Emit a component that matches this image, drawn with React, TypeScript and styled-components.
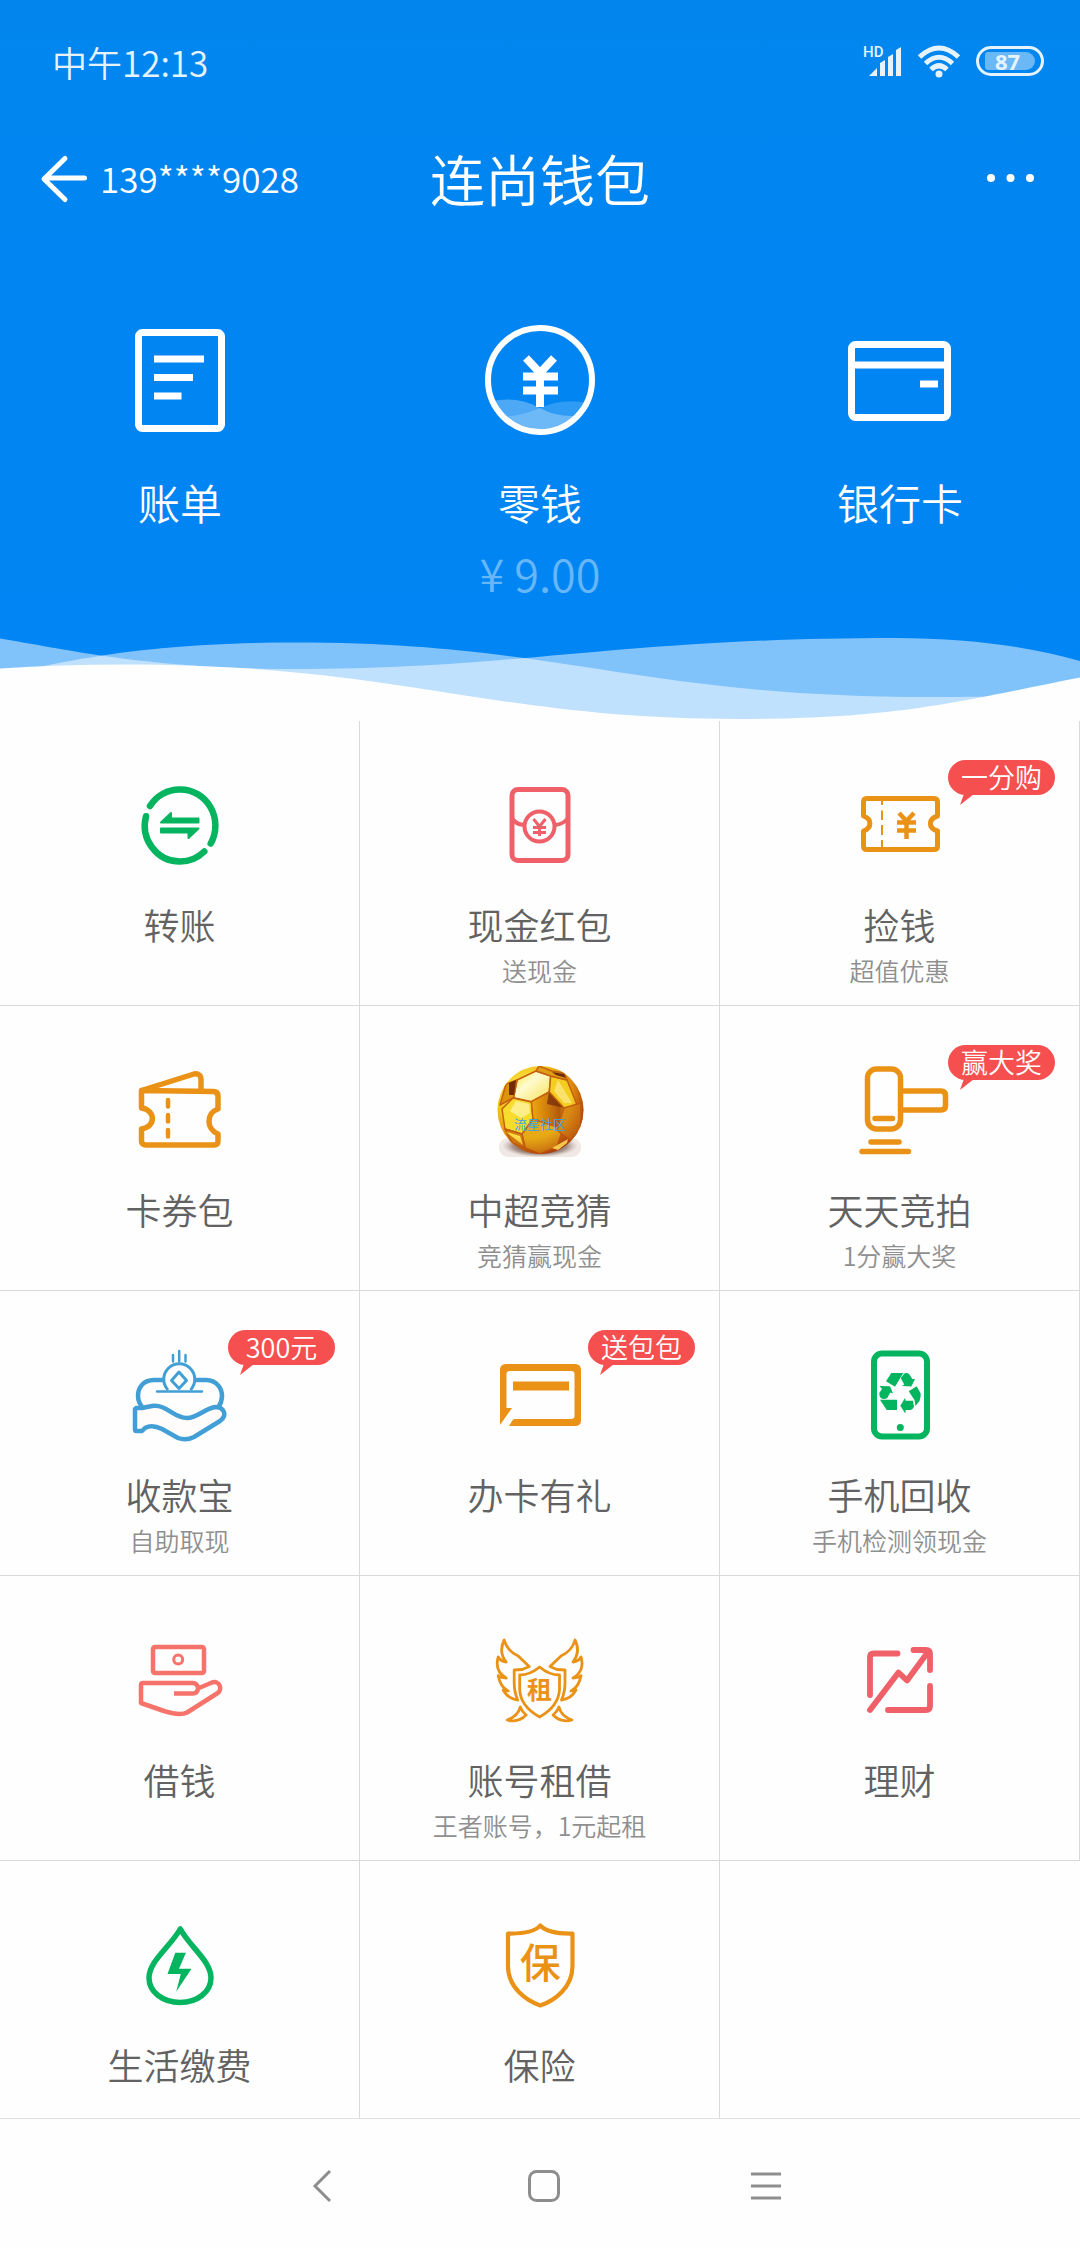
import React from "react";
import styled, { createGlobalStyle } from "styled-components";

const GREEN = "#04b45f";
const ORANGE = "#ea9216";
const RED = "#ef6069";
const CORAL = "#f6736b";
const BLUE = "#429fd6";

const GlobalStyle = createGlobalStyle`
  * { box-sizing: border-box; }
  body {
    margin: 0;
    background: #fefefe;
    font-family: "Noto Sans CJK SC", "Noto Sans", sans-serif;
    font-weight: 350;
  }
  button {
    font: inherit;
    color: inherit;
    background: none;
    border: 0;
    padding: 0;
    margin: 0;
    cursor: pointer;
  }
  svg { display: block; flex: none; overflow: visible; }
`;

const Hero = styled.header`
  color: #fff;
  background: linear-gradient(#0286ee, #0085f2 260px, #0085f4);
`;

const StatusBar = styled.div`
  display: flex;
  align-items: center;
  justify-content: space-between;
  height: 122px;
  padding: 0 36px 0 52px;
  color: #e6f3fd;
  font-size: 35px;
`;

const StatusIcons = styled.div`
  display: flex;
  align-items: center;
  gap: 16px;
`;

const Battery = styled.span`
  display: flex;
  align-items: center;
  justify-content: center;
  width: 68px;
  height: 30px;
  border: 3px solid #e6f3fd;
  border-radius: 15px;
`;

const BatteryLevel = styled.span`
  width: 50px;
  height: 18px;
  border-radius: 3px 9px 9px 3px;
  background: #6bb8f6;
  font-family: "Noto Sans", sans-serif;
  font-size: 22px;
  font-weight: 700;
  line-height: 18px;
  padding-left: 10px;
`;

const TitleBar = styled.div`
  display: grid;
  grid-template-columns: 1fr auto 1fr;
  align-items: center;
  height: 116px;
  padding: 0 41px;
`;

const Account = styled.button`
  display: flex;
  align-items: center;
  justify-self: start;
  gap: 13px;
  font-size: 35px;
`;

const AccountNumber = styled.span`
  padding-bottom: 6px;
`;

const Title = styled.h1`
  margin: 0;
  padding-bottom: 6px;
  font-size: 55px;
  font-weight: 350;
  line-height: 80px;
`;

const MoreButton = styled.button`
  justify-self: end;
`;

const Actions = styled.nav`
  display: grid;
  grid-template-columns: repeat(3, 1fr);
  align-items: start;
  padding: 87px 0 32px;
`;

const Action = styled.button`
  display: flex;
  flex-direction: column;
  align-items: center;
`;

const ActionLabel = styled.span`
  margin-top: 37px;
  font-size: 42px;
  line-height: 60px;
`;

const Amount = styled.span`
  margin-top: 11px;
  font-size: 45px;
  line-height: 60px;
  color: #66b6f8;
`;

const Wave = styled.svg`
  width: 100%;
  height: 86px;
`;

const Grid = styled.main`
  display: grid;
  grid-template-columns: repeat(3, 1fr);
  grid-auto-rows: minmax(257px, auto);
`;

const Cell = styled.button<{ $last: boolean }>`
  position: relative;
  display: flex;
  flex-direction: column;
  align-items: center;
  justify-content: flex-start;
  padding: 57px 0 14px;
  border-right: 1px solid #d9d9d9;
  border-bottom: ${(p) => (p.$last ? "0" : "1px solid #d9d9d9")};
`;

const CellLabel = styled.span`
  margin-top: 25px;
  font-size: 36px;
  line-height: 51px;
  color: #626262;
`;

const CellNote = styled.span`
  font-size: 25px;
  line-height: 41px;
  color: #8f8f8f;
`;

const Badge = styled.span`
  position: absolute;
  top: 39px;
  right: 24px;
  width: 107px;
  height: 35px;
  border-radius: 18px;
  background: #f54f50;
  color: #fff;
  font-size: 27px;
  line-height: 34px;
  text-align: center;

  &::after {
    content: "";
    position: absolute;
    left: 12px;
    top: 34px;
    width: 14px;
    height: 11px;
    background: #f54f50;
    clip-path: polygon(28% 0, 100% 0, 0 100%);
  }
`;

const SystemNav = styled.footer`
  display: flex;
  justify-content: center;
  height: 130px;
  padding: 5px 0 0 8px;
  border-top: 1px solid #e2e2e2;
`;

const NavButton = styled.button`
  display: flex;
  align-items: center;
  justify-content: center;
  width: 222px;
`;

type IconProps = { color: string; width?: number; children: React.ReactNode };

const Icon = ({ color, width = 5, children }: IconProps) => (
  <svg
    width="96"
    height="96"
    viewBox="0 0 96 96"
    fill="none"
    stroke={color}
    strokeWidth={width}
    strokeLinejoin="round"
    aria-hidden="true"
  >
    {children}
  </svg>
);

const TransferIcon = () => (
  <Icon color={GREEN} width={6.5}>
    <path
      d="M18 28A35 36 0 0 1 48 11.500A35 36 0 0 1 78.700 65.500M72.300 73.500A35 36 0 0 1 48 83.500A35 36 0 0 1 14 38.200"
      strokeLinecap="round"
    />
    <path
      d="M29 44.500L39 35V40.500H66.500V44.500ZM66.500 50.500L56.500 60V54.500H29V50.500Z"
      fill={GREEN}
      strokeWidth="2"
    />
  </Icon>
);

const RedPacketIcon = () => (
  <Icon color={RED} width={5}>
    <rect x="20" y="11.500" width="56" height="71" rx="6" />
    <circle cx="47.500" cy="48.500" r="15" strokeWidth="4" />
    <path d="M20 40Q23 46 32 47M76 40Q72 46 63 47" strokeWidth="4" />
    <path d="M41.500 41L47.500 48.500L53.500 41M47.500 48V58M41 49.500H54M41 54.500H54" strokeWidth="3" />
  </Icon>
);

const CouponIcon = () => (
  <Icon color={ORANGE} width={5}>
    <path d="M15 20.500H82Q85.500 20.500 85.500 24V38C76 41 76 50 85.500 53V68Q85.500 71.500 82 71.500H15Q11.500 71.500 11.500 68V53C20 50 20 41 11.500 38V24Q11.500 20.500 15 20.500Z" />
    <path d="M30 22V27M30 32.500V42M30 47V57M30 62V70" strokeWidth="2" />
    <path d="M47 35L54.500 43L62 35M54.500 43V61M45 44.500H64M45 52.500H64" strokeWidth="4.500" />
  </Icon>
);

const CardPackIcon = () => (
  <Icon color={ORANGE} width={5.5}>
    <path d="M9.500 27.500L81 28.500Q86 28.500 86 33V46C74 50 74 66 86 71V78Q86 82 82 82H14Q9.500 82 9.500 78V66C24 64 24 47 9.500 45Z" />
    <path d="M9.500 27.500L62 11Q69 10 69 17V27" />
    <path d="M36 37V43.500M36 52V58.500M36 67V73.500" strokeLinecap="round" strokeWidth="4.500" />
  </Icon>
);

const FootballIcon = () => (
  <svg width="96" height="96" viewBox="0 0 96 96" aria-hidden="true">
    <defs>
      <radialGradient id="ball" cx="0.32" cy="0.3" r="0.78">
        <stop offset="0" stopColor="#fdf04f" />
        <stop offset="0.45" stopColor="#f2c41a" />
        <stop offset="0.75" stopColor="#dc850c" />
        <stop offset="1" stopColor="#a83a0c" />
      </radialGradient>
      <radialGradient id="ballRim" cx="0.4" cy="0.35" r="0.66">
        <stop offset="0.65" stopColor="#b8480c" stopOpacity="0" />
        <stop offset="1" stopColor="#a8380c" stopOpacity="0.75" />
      </radialGradient>
      <radialGradient id="ballShade">
        <stop offset="0.3" stopColor="#43291d" />
        <stop offset="0.75" stopColor="#8c7469" stopOpacity="0.7" />
        <stop offset="1" stopColor="#e9dfda" stopOpacity="0.4" />
      </radialGradient>
      <linearGradient id="panelLight" x1="0" y1="0" x2="1" y2="1">
        <stop offset="0" stopColor="#f6e22c" />
        <stop offset="0.4" stopColor="#fffbd0" />
        <stop offset="1" stopColor="#f8e14e" />
      </linearGradient>
      <linearGradient id="panelDark">
        <stop offset="0" stopColor="#efa80e" />
        <stop offset="0.5" stopColor="#cf7c0c" />
        <stop offset="0.85" stopColor="#b05a0b" />
        <stop offset="1" stopColor="#d58a12" />
      </linearGradient>
      <clipPath id="ballClip">
        <ellipse cx="48.500" cy="47" rx="43" ry="44" />
      </clipPath>
    </defs>
    <rect x="7" y="75" width="82" height="19" rx="9" fill="#efe8e5" />
    <ellipse cx="48" cy="83" rx="37" ry="11" fill="url(#ballShade)" />
    <ellipse cx="48.500" cy="47" rx="43" ry="44" fill="url(#ball)" />
    <g clipPath="url(#ballClip)" stroke="#c56010" strokeWidth="1.500" strokeLinejoin="round" fill="none">
      <path d="M44 8L25 17L21.600 34.700L39.400 38.700L57.300 29L58.700 13Z" fill="url(#panelLight)" />
      <path d="M21 35L39.400 39L41 56L30 71L13 66L10 46Z" fill="#f7dc2e" />
      <path d="M24 38L37 41L38 50L29 55L18 48Z" fill="#fff3a0" stroke="none" opacity="0.8" />
      <path d="M57.300 29L72.300 45.300L65 67L41 56.300L39.400 38.700Z" fill="url(#panelDark)" />
      <path d="M57 29L72.300 45L55 41Z" fill="#7b2f07" stroke="none" opacity="0.8" />
      <path d="M58.700 13L75 17L85.500 43L72.300 45.300L57.300 29Z" fill="#f3cd20" />
      <path d="M66 17L80 40L72 40L62 28Z" fill="#fff0a0" stroke="none" opacity="0.6" />
      <path d="M25 17L14 21L8 42L21.600 34.700Z" fill="#dd930e" />
      <path d="M24 17L17 20V32L22 32Z" fill="#6d2b08" stroke="none" />
      <path d="M47 3L60 8L72 10L75 17L58.700 13L44 8Z" fill="#e09c12" />
      <path d="M60 9L72 11L74 15L64 12Z" fill="#6d2b08" stroke="none" />
      <path d="M30 71L33 85L48 91L65 84L71 66L41 56Z" fill="#e7aa15" />
      <path d="M72 45L89 40V66L79 78L65 67Z" fill="#d98a14" />
      <path d="M13 66L30 71L33 85L20 80Z" fill="#d4820e" />
      <path d="M14 69L28 73L31 82Z" fill="#ffe34a" stroke="none" />
      <path d="M0 0H96V96H0Z" fill="url(#ballRim)" stroke="none" />
      <path d="M60 85L76 76L75 80L66 87Z" fill="#f5c84a" stroke="none" />
    </g>
    <text x="48" y="66" textAnchor="middle" fontSize="13" fill="#2ba6ee">
      流星社区
    </text>
  </svg>
);

const GavelIcon = () => (
  <Icon color={ORANGE} width={5.5}>
    <rect x="15.500" y="6" width="33" height="60" rx="9" />
    <path d="M49 28H89Q93.500 28 93.500 33V42.500Q93.500 47 89 47H49" />
    <path d="M23 55.500H40.500M19 79H47M10 88.500H56.500" strokeLinecap="round" />
  </Icon>
);

const CollectIcon = () => (
  <Icon color={BLUE} width={4.5}>
    <path d="M31 32H22C10 32 6 41 6 48Q6 55 12 61M63 32H74C85 32 90 41 90 48Q90 54 86 60" />
    <path
      d="M4 60H10L20 58C35 56 41 70 55 70C65 70 72 61 83 59C92 59 96 67 88 73L62 89Q54 93 46 90L30 81Q20 76 13 80L10 83H4Q3 83 3 81V61Z"
      fill="#fffcfb"
    />
    <path d="M36 42A15.500 15.500 0 1 1 58.500 42" strokeWidth="3" />
    <path d="M47 24L54.500 32.500L47 40.500L39.500 32.500Z" strokeWidth="3" />
    <path d="M25 43.500H70M41 7V13.500M47.200 3V13.500M53.500 7V13.500" strokeWidth="2.500" strokeLinecap="round" />
  </Icon>
);

const CardGiftIcon = () => (
  <Icon color={ORANGE} width={7}>
    <path
      d="M8 77V22Q8 16 14 16H83Q89 16 89 22V72Q89 78 83 78H17L20 73Q21 71 23 71H79Q82.500 71 82.500 68V26Q82.500 23 79 23H18Q14.500 23 14.500 26V60H20Z"
      fill={ORANGE}
      stroke="none"
    />
    <path d="M21 38H77" strokeWidth="9" />
  </Icon>
);

const RecycleIcon = () => (
  <Icon color={GREEN} width={6}>
    <rect x="22" y="5.500" width="53" height="83" rx="8" />
    <circle cx="48.300" cy="79.500" r="3.500" fill={GREEN} stroke="none" />
    <g fill={GREEN} stroke="none">
      <path d="M34 33.300L39.300 25H51.300L43 38.700Z" />
      <path d="M48.700 30.300L52 25.700Q55 24 57.500 26.500L60.300 31L63 31L59.300 38.500L50 38L52.300 36.500Z" />
      <path d="M56.700 43.300L64.700 38.300L68.700 45.500Q69 49 67.500 53L63.500 58L62.500 52Z" />
      <path d="M48.300 57.700L53 50L53.700 52.700H61L62 58.500Q60.500 62 58 62H53.700L53.300 65.500Z" />
      <path d="M28 51.700H45V62H34.700Z" />
      <path d="M27.500 38L38 38.300L41 45.500L38.300 44.500L35.300 50Q32 52 29 50.300Q27 48 27.300 45L30 41Z" />
    </g>
  </Icon>
);

const BorrowIcon = () => (
  <Icon color={CORAL} width={4.5}>
    <rect x="21" y="14" width="51" height="26" rx="2" />
    <circle cx="46.200" cy="26.500" r="4.500" strokeWidth="3" />
    <path d="M42 60.500H61Q65 60.500 66 56L67 55L80 49.500C88 47 91 57 85 60.500L55 79.500Q48 83 32 78L9 70V52Q9 50 11 50H61Q65 50 66 55" />
  </Icon>
);

const wing =
  "M58 33.500L69 23Q80 18 83 7Q89 19 81 29Q87 28 89 24Q93 38 81 45Q87 45 89 42.500Q87 54 79 58L84 57Q79 66 69.500 67Q73 59 73 50V37L65 36.500Z M67 74Q69 83 80 87Q69 90 61 82Q65 79 67 74Z";

const RentIcon = () => (
  <Icon color={ORANGE} width={2.8}>
    <path d={wing} />
    <path d={wing} transform="translate(95.200 0) scale(-1 1)" />
    <path d="M47.600 34Q57 42 67.500 42V56Q67 73 47.600 84Q28 73 27.700 56V42Q38 42 47.600 34Z" />
    <text x="47.600" y="66" textAnchor="middle" fontSize="25" fontWeight="700" fill={ORANGE} stroke="none">
      租
    </text>
  </Icon>
);

const FinanceIcon = () => (
  <Icon color={RED} width={5.8}>
    <path
      d="M18 62V24Q18 20.500 22 20.500H45.500M61.500 17H74Q78 17 78 21V37M78 53V73Q78 77 74 77H36M18 77L46.500 39.500L55 47.500L76 19"
      strokeLinecap="round"
    />
  </Icon>
);

const UtilityIcon = () => (
  <Icon color={GREEN} width={5.5}>
    <path d="M48.300 11C38 29 17 43 17 60C17 74 31 84.500 48.300 84.500C65 84.500 79 74 79 60C79 43 58 29 48.300 11Z" />
    <path d="M43.300 34.700H53.900L47 50.700H59.500L44.200 73.700L48.800 56H35.500Z" fill={GREEN} stroke="none" />
  </Icon>
);

const InsuranceIcon = () => (
  <Icon color={ORANGE} width={4.2}>
    <path d="M48.300 7.500Q41 16 16 15.500V48C16 70 35 83 48.300 87.500C62 83 80.500 70 80.500 48V15.500Q56 16 48.300 7.500Z" />
    <text x="48.300" y="60" textAnchor="middle" fontSize="41" fontWeight="500" fill={ORANGE} stroke="none">
      保
    </text>
  </Icon>
);

type Service = { label: string; note?: string; badge?: string; icon: React.ReactNode };

const services: Service[] = [
  { label: "转账", icon: <TransferIcon /> },
  { label: "现金红包", note: "送现金", icon: <RedPacketIcon /> },
  { label: "捡钱", note: "超值优惠", badge: "一分购", icon: <CouponIcon /> },
  { label: "卡券包", icon: <CardPackIcon /> },
  { label: "中超竞猜", note: "竞猜赢现金", icon: <FootballIcon /> },
  { label: "天天竞拍", note: "1分赢大奖", badge: "赢大奖", icon: <GavelIcon /> },
  { label: "收款宝", note: "自助取现", badge: "300元", icon: <CollectIcon /> },
  { label: "办卡有礼", badge: "送包包", icon: <CardGiftIcon /> },
  { label: "手机回收", note: "手机检测领现金", icon: <RecycleIcon /> },
  { label: "借钱", icon: <BorrowIcon /> },
  { label: "账号租借", note: "王者账号，1元起租", icon: <RentIcon /> },
  { label: "理财", icon: <FinanceIcon /> },
  { label: "生活缴费", icon: <UtilityIcon /> },
  { label: "保险", icon: <InsuranceIcon /> },
];

const lastRowStart = Math.floor((services.length - 1) / 3) * 3;

const BillIcon = () => (
  <svg width="110" height="110" viewBox="0 0 110 110" fill="none" stroke="#fff" strokeWidth="7" aria-hidden="true">
    <rect x="13.500" y="7.500" width="83" height="96" rx="4" />
    <path d="M29 34H79M29 52.500H68M29 71H56.500" />
  </svg>
);

const ChangeIcon = () => (
  <svg width="110" height="110" viewBox="0 0 110 110" fill="none" aria-hidden="true">
    <clipPath id="coin">
      <circle cx="55" cy="55" r="50" />
    </clipPath>
    <g clipPath="url(#coin)" fill="#fff">
      <path d="M0 78Q30 69 55 83Q78 96 110 88V110H0Z" opacity="0.300" />
      <path d="M0 92Q30 94 55 83Q80 71 110 80V110H0Z" opacity="0.180" />
    </g>
    <circle cx="55" cy="55" r="52" stroke="#fff" strokeWidth="6" />
    <path d="M41 33L55 48L69 33M55 47V82M38 51.500H73M38 65.500H73" stroke="#fff" strokeWidth="8" />
  </svg>
);

const BankCardIcon = () => (
  <svg width="110" height="110" viewBox="0 0 110 110" fill="none" stroke="#fff" strokeWidth="7" aria-hidden="true">
    <rect x="6.500" y="19.500" width="96" height="73" rx="4" />
    <path d="M6 40H103M75 59H93" />
  </svg>
);

export default function App() {
  return (
    <>
      <GlobalStyle />
      <Hero>
        <StatusBar>
          <time>中午12:13</time>
          <StatusIcons>
            <svg width="39" height="32" viewBox="0 0 39 32" fill="#e6f3fd" aria-hidden="true">
              <text x="0" y="12" fontSize="15" fontWeight="500" fontFamily="Roboto, sans-serif">
                HD
              </text>
              <path d="M6 31L14 23V31ZM17 18L22 15V31H17ZM25 12L30 9V31H25ZM33 5L38 2V31H33Z" />
            </svg>
            <svg width="42" height="32" viewBox="0 0 42 32" fill="none" stroke="#e6f3fd" strokeWidth="5" aria-hidden="true">
              <path d="M1.500 12Q21 -6 40.500 12M7.500 18.500Q21 6 34.500 18.500M13 24.500Q21 17 29 24.500" />
              <circle cx="21" cy="29" r="3.500" fill="#e6f3fd" stroke="none" />
            </svg>
            <Battery>
              <BatteryLevel>87</BatteryLevel>
            </Battery>
          </StatusIcons>
        </StatusBar>
        <TitleBar>
          <Account aria-label="返回 139****9028">
            <svg
              width="46"
              height="46"
              viewBox="0 0 46 46"
              fill="none"
              stroke="#fff"
              strokeWidth="5"
              strokeLinecap="round"
              strokeLinejoin="round"
            >
              <path d="M24 1.500L3 22L24 42.500M4 21H43.500" />
            </svg>
            <AccountNumber>139****9028</AccountNumber>
          </Account>
          <Title>连尚钱包</Title>
          <MoreButton aria-label="更多">
            <svg width="53" height="48" viewBox="0 0 53 48" fill="#fff">
              <circle cx="5" cy="22" r="4" />
              <circle cx="24.500" cy="22" r="4" />
              <circle cx="44" cy="22" r="4" />
            </svg>
          </MoreButton>
        </TitleBar>
        <Actions>
          <Action>
            <BillIcon />
            <ActionLabel>账单</ActionLabel>
          </Action>
          <Action>
            <ChangeIcon />
            <ActionLabel>零钱</ActionLabel>
            <Amount>¥ 9.00</Amount>
          </Action>
          <Action>
            <BankCardIcon />
            <ActionLabel>银行卡</ActionLabel>
          </Action>
        </Actions>
        <Wave viewBox="0 0 1080 86" preserveAspectRatio="none" aria-hidden="true">
          <path d="M0 3.500C70 15 150 34 296 34C520 34 620 3 895 3C970 3 1030 12 1080 26V86H0Z" fill="#fff" opacity="0.500" />
          <path d="M0 40C70 26 140 7.500 296 7.500C560 7.500 640 62 930 62C1000 62 1040 60 1080 58V86H0Z" fill="#fff" opacity="0.500" />
          <path d="M0 33.500Q60 29.500 124 29.500C400 29.500 490 84 737 84C900 84 960 66 1080 42.500V87H0Z" fill="#fefefe" />
        </Wave>
      </Hero>
      <Grid>
        {services.map((s, i) => (
          <Cell key={s.label} $last={i >= lastRowStart}>
            {s.icon}
            <CellLabel>{s.label}</CellLabel>
            {s.note && <CellNote>{s.note}</CellNote>}
            {s.badge && <Badge>{s.badge}</Badge>}
          </Cell>
        ))}
      </Grid>
      <SystemNav>
        <NavButton aria-label="返回">
          <svg width="18" height="32" viewBox="0 0 18 32" fill="none" stroke="#8d8d8d" strokeWidth="3">
            <path d="M17 1L2 16L17 31" />
          </svg>
        </NavButton>
        <NavButton aria-label="主屏幕">
          <svg width="32" height="32" viewBox="0 0 32 32" fill="none" stroke="#8d8d8d" strokeWidth="3">
            <rect x="1.500" y="1.500" width="29" height="29" rx="7" />
          </svg>
        </NavButton>
        <NavButton aria-label="菜单">
          <svg width="30" height="32" viewBox="0 0 30 32" fill="none" stroke="#8d8d8d" strokeWidth="3">
            <path d="M0 4H30M0 16H30M0 28H30" />
          </svg>
        </NavButton>
      </SystemNav>
    </>
  );
}
